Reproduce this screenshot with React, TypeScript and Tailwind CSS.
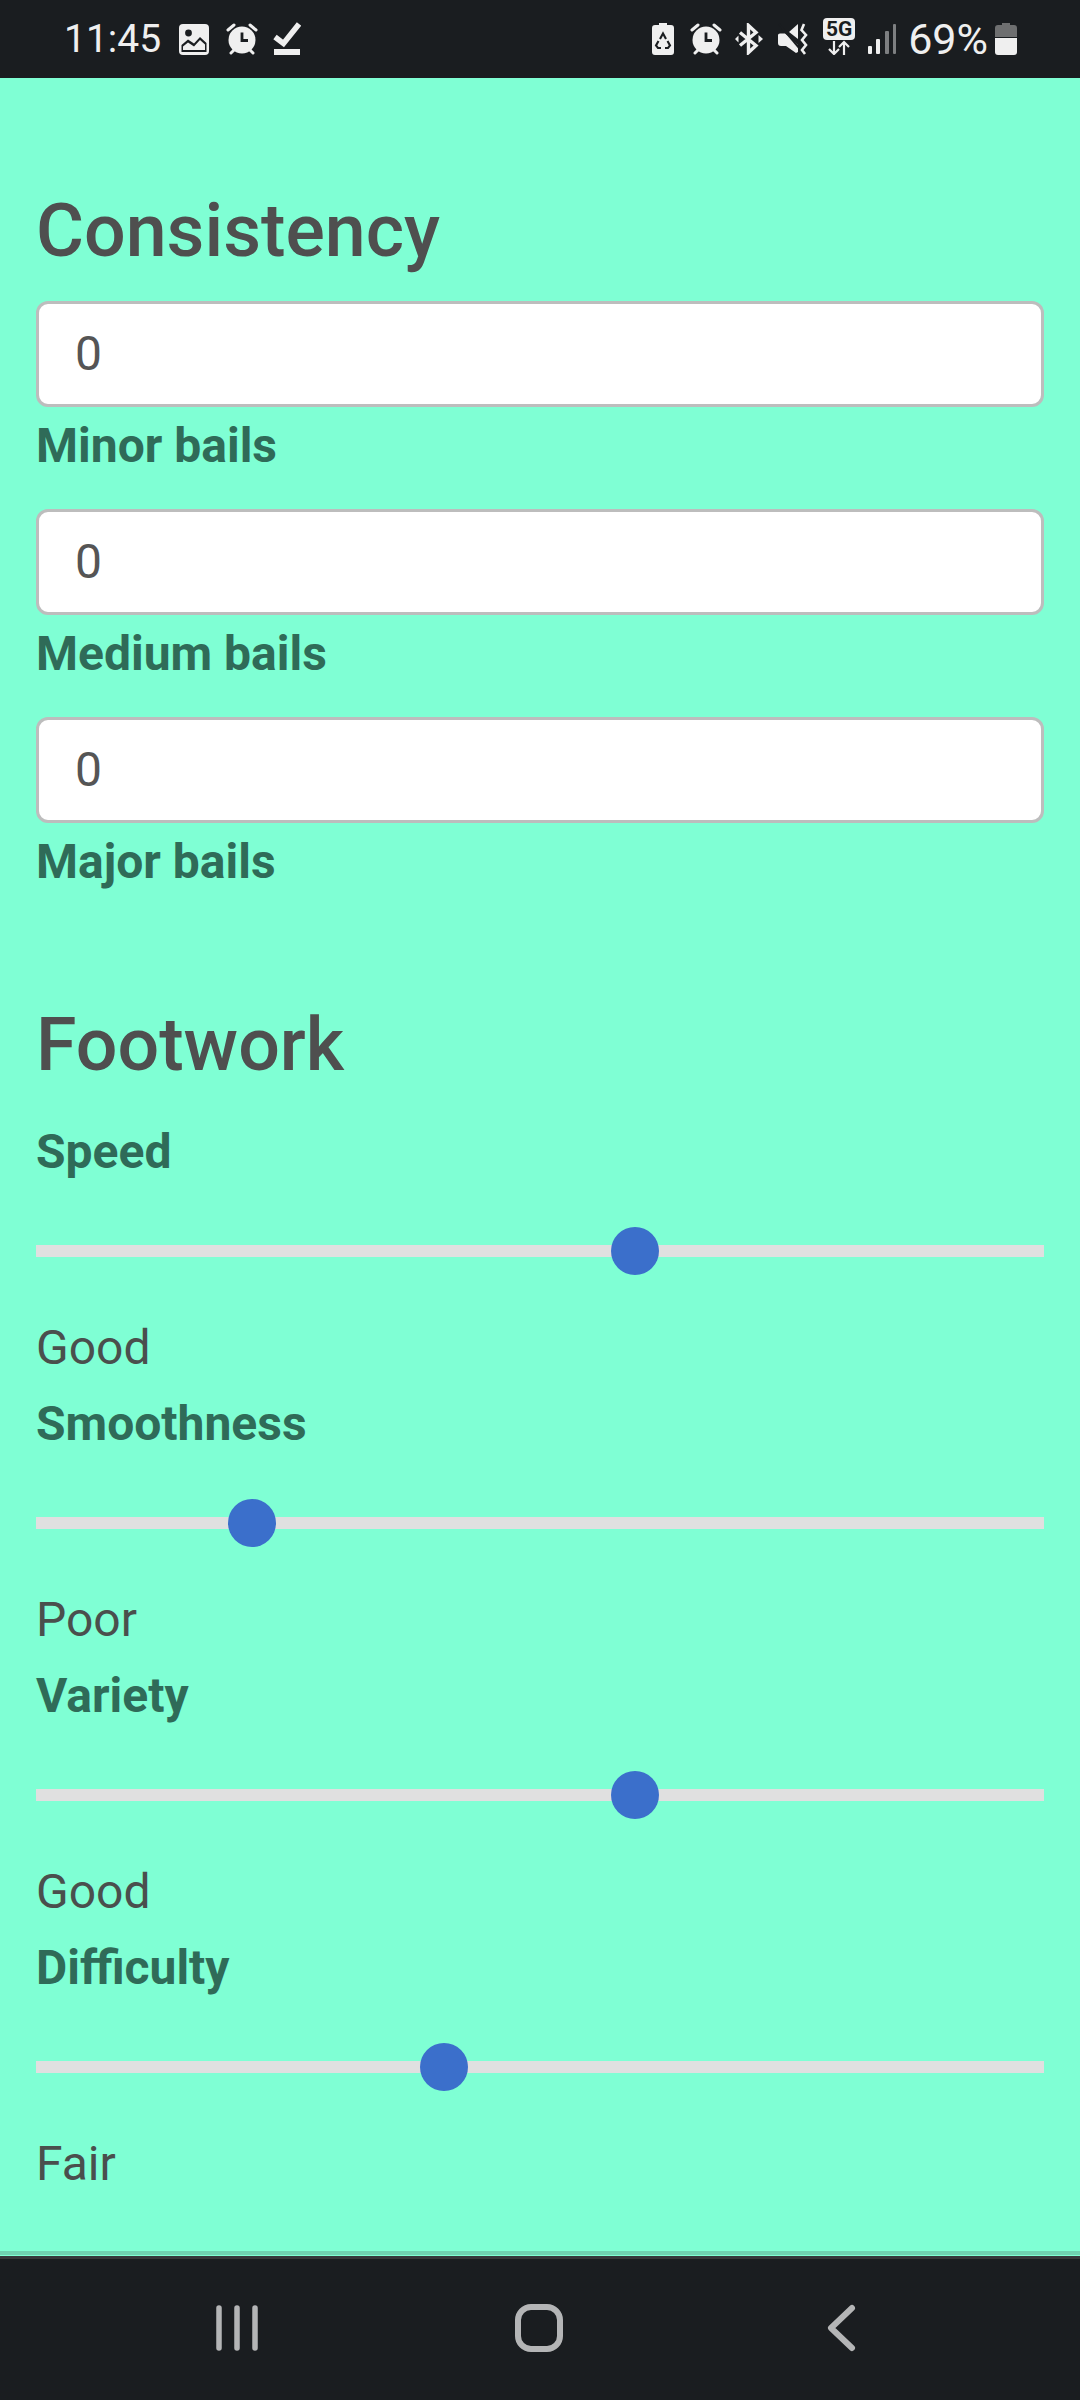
import React from "react";

const C = "#efefef";
const font = { fontFamily: 'Roboto, "Liberation Sans", sans-serif' };

const ImageIcon = () => (
  <svg width="30" height="32" viewBox="0 0 30 32" className="ml-[18px]">
    <rect x="0" y="1" width="30" height="31" rx="4" fill={C} />
    <circle cx="9.5" cy="10" r="3.4" fill="#1a1d20" />
    <path d="M2.5 22 L9 16.5 L15 20.5 L21 14 L27.5 20 L27.5 29 L2.5 29 Z" fill="#1a1d20" />
    <path d="M4 23.5 L9 19.5 L15 23.5 L21 17 L26 21.5 L26 27 L4 27 Z" fill={C} />
  </svg>
);

const Alarm = ({ className }: { className: string }) => (
  <svg width="32" height="32" viewBox="0 0 32 32" className={className}>
    <circle cx="16" cy="17" r="13.5" fill={C} />
    <path d="M16 9.5 V17.5 H22" fill="none" stroke="#1a1d20" strokeWidth="2.8" />
    <path d="M2 7 L8 2 M30 7 L24 2 M5 30 L8 27 M27 30 L24 27" stroke={C} strokeWidth="3" strokeLinecap="round" />
  </svg>
);

const Check = () => (
  <svg width="28" height="34" viewBox="0 0 28 34" className="ml-[15px]">
    <path d="M2 15 L10.5 21.5 L26 2" fill="none" stroke={C} strokeWidth="5.5" />
    <rect x="1" y="27" width="26" height="6" fill={C} />
  </svg>
);

const BatteryRecycle = () => (
  <svg width="22" height="32" viewBox="0 0 22 32">
    <path d="M7 0 H15 V2 H19 Q22 2 22 5 V29 Q22 32 19 32 H3 Q0 32 0 29 V5 Q0 2 3 2 H7 Z" fill={C} />
    <path d="M8 16 L11 10.5 L14 16 M15.5 18 L18 22.5 L16 25 H13 M9 25 H6 L4 22.5 L6.5 18" fill="none" stroke="#1a1d20" strokeWidth="2.1" />
  </svg>
);

const Bluetooth = () => (
  <svg width="28" height="32" viewBox="0 0 28 32" className="ml-[13px]">
    <path d="M5 9.5 L21 22.5 L13.5 29.5 V2.5 L21 9.5 L5 22.5" fill="none" stroke={C} strokeWidth="3.4" />
    <path d="M0 16 L3.5 12.5 V19.5 Z M28 16 L23.5 12 V20 Z" fill={C} />
  </svg>
);

const Mute = () => (
  <svg width="30" height="32" viewBox="0 0 30 32" className="ml-[15px]">
    <path d="M0 12 Q0 10.5 2 10.5 H7 L15 17 L20 22 V29 L18 30 L8 23 H3 Q0 23 0 20 Z" fill={C} />
    <path d="M11 9 L20 1 V16 Z" fill={C} />
    <path d="M1 1 L22 26" stroke="#1a1d20" strokeWidth="2" />
    <path d="M26 1 L23.5 7 L28 12 L24 17 L28 22 L24 27 L27 31" fill="none" stroke={C} strokeWidth="2.6" />
  </svg>
);

const FiveG = () => (
  <div className="ml-[15px] relative w-[32px] h-[37px] mt-[-6px] flex flex-col items-center">
    <div className="w-[32px] h-[22px] rounded-[4px] bg-[#efefef] text-[#1a1d20] text-[21px] leading-[22px] font-bold text-center" style={font}>5G</div>
    <svg width="26" height="15" viewBox="0 0 26 15">
      <path d="M8 1 V14 M3 9 L8 14 L13 9 M18 15 V2 M13 7 L18 2 L23 7" fill="none" stroke={C} strokeWidth="2.2" />
    </svg>
  </div>
);

const Signal = () => (
  <svg width="28" height="30" viewBox="0 0 28 30" className="ml-[13px]">
    <rect x="0" y="22" width="4" height="8" rx="1" fill={C} />
    <rect x="8" y="15" width="4" height="15" rx="1" fill={C} />
    <rect x="17" y="7" width="4" height="23" rx="1" fill="#7d7f81" />
    <rect x="25" y="0" width="3" height="30" rx="1" fill="#7d7f81" />
  </svg>
);

const Battery = () => (
  <svg width="22" height="32" viewBox="0 0 22 32" className="ml-[7px]">
    <path d="M7 0 H15 V2 H19 Q22 2 22 5 V14 H0 V5 Q0 2 3 2 H7 Z" fill="#6e6f70" />
    <path d="M0 15 H22 V29 Q22 32 19 32 H3 Q0 32 0 29 Z" fill={C} />
  </svg>
);

const StatusBar = () => (
  <div className="h-[78px] bg-[#1a1d20] flex items-center pl-[64px] pr-[63px]">
    <span className="text-[39px] leading-[48px] text-[#efefef]" style={font}>11:45</span>
    <ImageIcon />
    <Alarm className="ml-[17px]" />
    <Check />
    <div className="flex-1" />
    <BatteryRecycle />
    <Alarm className="ml-[16px]" />
    <Bluetooth />
    <Mute />
    <FiveG />
    <Signal />
    <span className="ml-[12px] text-[43px] leading-[48px] text-[#efefef]" style={font}>69%</span>
    <Battery />
  </div>
);

const Heading = ({ children, className }: { children: React.ReactNode; className: string }) => (
  <h2 className={`text-[73.5px] leading-[86px] font-medium text-[#4f4f4f] ${className}`}>{children}</h2>
);

const Field = ({ label }: { label: string }) => (
  <div className="h-[208px]">
    <div className="h-[106px] rounded-[12px] border-[3px] border-[#bdbdbd] bg-white pl-[36px] flex items-center text-[48px] text-[#555]">
      0
    </div>
    <div className="mt-[14px] text-[48px] leading-[50px] font-bold text-[#2f6b58]">{label}</div>
  </div>
);

const Slider = ({ label, value, left }: { label: string; value: string; left: string }) => (
  <div className="h-[272px]">
    <div className="text-[48px] leading-[54px] font-bold text-[#2f6b58]">{label}</div>
    <div className="relative h-[48px] mt-[48px] flex items-center">
      <div className="w-full h-[12px] bg-[#e0e0e0]" />
      <div className={`absolute top-0 w-[48px] h-[48px] rounded-full bg-[#3b6fcb] ${left}`} />
    </div>
    <div className="mt-[45px] text-[48px] leading-[56px] text-[#4a4f4d]">{value}</div>
  </div>
);

const NavBar = () => (
  <div className="flex-1 bg-[#1a1d20] border-t-[3px] border-[#36383b]">
    <svg width="1080" height="141" viewBox="0 0 1080 141">
      <path d="M219 49 V89 M237 49 V89 M255 49 V89" stroke="#b4b5b6" strokeWidth="5.5" strokeLinecap="round" />
      <rect x="518" y="48" width="42" height="42" rx="13" fill="none" stroke="#b4b5b6" strokeWidth="6" />
      <path d="M852 49 L831 69 L852 89" fill="none" stroke="#b4b5b6" strokeWidth="6" strokeLinecap="round" strokeLinejoin="round" />
    </svg>
  </div>
);

export default function App() {
  return (
    <div className="w-[1080px] h-[2400px] flex flex-col bg-[#7fffd4] overflow-hidden" style={font}>
      <StatusBar />
      <div className="h-[2177px] px-[36px] pt-[110px] border-b-[4px] border-[#6fd3b1]">
        <Heading className="mb-[27px]">Consistency</Heading>
        <Field label="Minor bails" />
        <Field label="Medium bails" />
        <Field label="Major bails" />
        <Heading className="mt-[77px] mb-[37px]">Footwork</Heading>
        <Slider label="Speed" value="Good" left="left-[575px]" />
        <Slider label="Smoothness" value="Poor" left="left-[192px]" />
        <Slider label="Variety" value="Good" left="left-[575px]" />
        <Slider label="Difficulty" value="Fair" left="left-[384px]" />
      </div>
      <div className="h-[1px]" />
      <NavBar />
    </div>
  );
}
